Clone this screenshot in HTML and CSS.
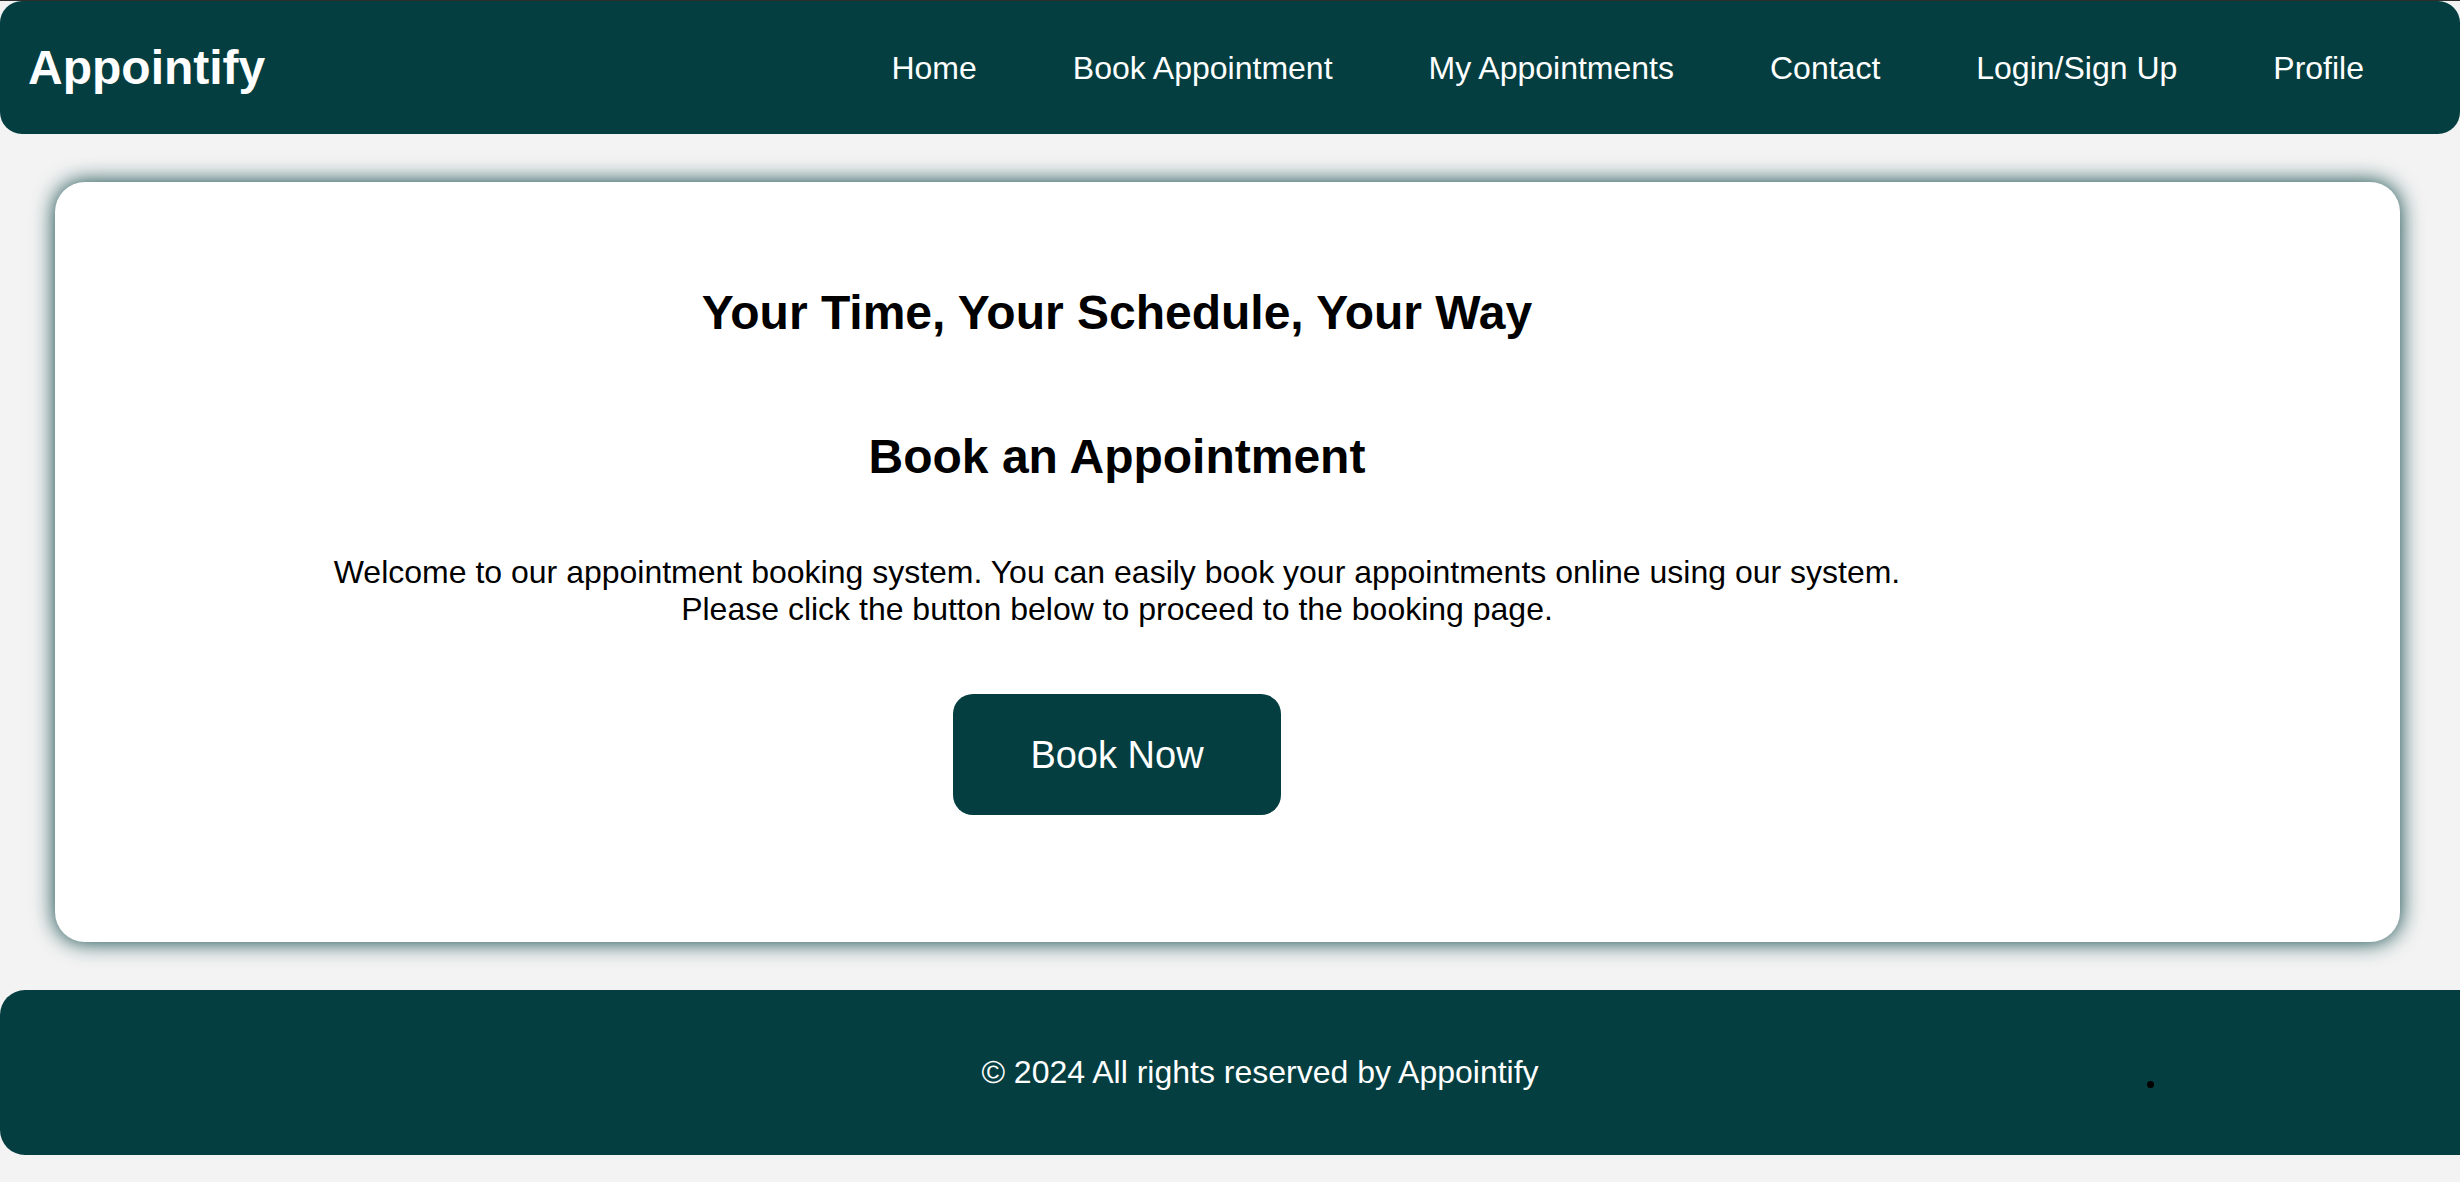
FILE: index.html
```html
<!DOCTYPE html>
<html lang="en">
<head>
<meta charset="utf-8">
<title>Appointify</title>
<link rel="stylesheet" href="styles.css">
</head>
<body>
<header class="site-header">
  <div class="logo">Appointify</div>
  <nav class="main-nav">
    <a href="#">Home</a>
    <a href="#">Book Appointment</a>
    <a href="#">My Appointments</a>
    <a href="#">Contact</a>
    <a href="#">Login/Sign Up</a>
    <a href="#">Profile</a>
  </nav>
</header>

<main class="hero-card">
  <div class="hero-content">
    <h1 class="hero-title">Your Time, Your Schedule, Your Way</h1>
    <h2 class="hero-subtitle">Book an Appointment</h2>
    <p class="hero-text">Welcome to our appointment booking system. You can easily book your appointments online using our system.<br>Please click the button below to proceed to the booking page.</p>
    <a class="book-btn" href="#">Book Now</a>
  </div>
</main>

<footer class="site-footer">
  <p class="footer-text">&copy; 2024 All rights reserved by Appointify</p>
  <span class="footer-dot"></span>
</footer>
</body>
</html>
```

FILE: styles.css
```css
html {
  overflow-x: hidden;
}

body {
  margin: 0;
  background: #f3f3f3;
  font-family: "Liberation Sans", Arial, sans-serif;
  color: #000;
  border-top: 1px solid #2d2d2d;
  overflow-x: hidden;
}

.site-header {
  height: 133px;
  background: #043e40;
  border-radius: 22px;
  display: flex;
  align-items: center;
  justify-content: space-between;
  padding: 0 96px 0 28px;
  box-sizing: border-box;
}

.logo {
  color: #fff;
  font-size: 48px;
  font-weight: bold;
  line-height: 1;
}

.main-nav {
  display: flex;
  gap: 96px;
  align-items: center;
}

.main-nav a {
  color: #fff;
  text-decoration: none;
  font-size: 32px;
  line-height: 1;
}

.hero-card {
  display: block;
  margin: 48px 60px 48px 55px;
  background: #fff;
  border-radius: 30px;
  box-shadow: 0 0 22px #043e40;
  padding: 103px 221px 127px 0;
}

.hero-content {
  display: flex;
  flex-direction: column;
  align-items: center;
  text-align: center;
}

.hero-title {
  margin: 0;
  font-size: 48px;
  font-weight: bold;
  line-height: 55px;
}

.hero-subtitle {
  margin: 89px 0 0;
  font-size: 48px;
  font-weight: bold;
  line-height: 56px;
}

.hero-text {
  margin: 69px 0 0;
  font-size: 32px;
  line-height: 37px;
}

.book-btn {
  margin-top: 66px;
  display: block;
  width: 328px;
  height: 121px;
  line-height: 123px;
  box-sizing: border-box;
  background: #043e40;
  color: #fff;
  text-decoration: none;
  font-size: 38px;
  border-radius: 20px;
}

.site-footer {
  position: relative;
  width: calc(100% + 60px);
  height: 165px;
  background: #043e40;
  border-radius: 25px;
  display: flex;
  align-items: center;
  justify-content: center;
}

.footer-text {
  margin: 0;
  color: #fff;
  font-size: 32px;
  line-height: 37px;
}

.footer-dot {
  position: absolute;
  left: 2147px;
  top: 91px;
  width: 7px;
  height: 7px;
  border-radius: 50%;
  background: #000;
}
```
